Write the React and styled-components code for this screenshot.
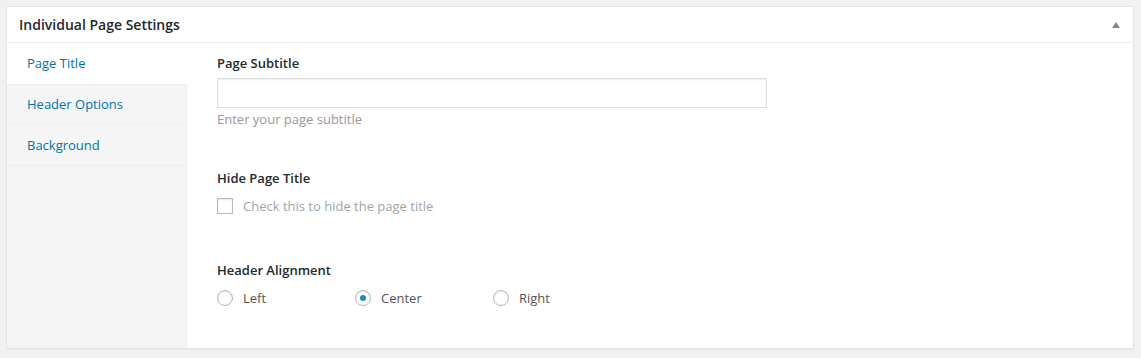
import React, { useState } from 'react';
import styled, { createGlobalStyle } from 'styled-components';

const Global = createGlobalStyle`
  html, body {
    margin: 0;
    padding: 0;
    background: #f1f1f1;
  }
  body {
    font-family: "Open Sans", "Liberation Sans", sans-serif;
    font-size: 13px;
    color: #444;
  }
`;

const tabs = ['Page Title', 'Header Options', 'Background'];
const alignments = ['Left', 'Center', 'Right'];

// page wrapper
const Page = styled.div`
  padding: 6px 7px 10px 6px;
`;

const Box = styled.div`
  background: #fff;
  border: 1px solid #e5e5e5;
  box-shadow: 0 1px 1px rgba(0, 0, 0, 0.04);
`;

const Header = styled.div`
  display: flex;
  align-items: center;
  justify-content: space-between;
  height: 35px;
  padding: 0 13px 0 12px;
  border-bottom: 1px solid #eee;
`;

const Title = styled.h2`
  margin: 0;
  font-size: 14px;
  font-weight: 600;
  color: #23282d;
  line-height: 1.4;
`;

const Toggle = styled.span`
  width: 0;
  height: 0;
  border-left: 4px solid transparent;
  border-right: 4px solid transparent;
  border-bottom: 6px solid #82878c;
  margin-top: 1px;
`;

const Body = styled.div`
  display: flex;
  min-height: 305px;
`;

const Sidebar = styled.ul`
  list-style: none;
  margin: 0;
  padding: 0;
  width: 179px;
  flex-shrink: 0;
  background: #f5f5f5;
  border-right: 1px solid #eee;
`;

const Tab = styled.li`
  display: flex;
  align-items: center;
  height: 40px;
  padding: 0 20px;
  border-bottom: 1px solid #eee;
  color: #0073aa;
  cursor: pointer;
  background: ${(p) => (p.$active ? '#fff' : 'transparent')};
  margin-right: ${(p) => (p.$active ? '-1px' : '0')};
  border-bottom-color: ${(p) => (p.$active ? '#fff' : '#eee')};
  position: relative;
  ${(p) => p.$active && 'box-shadow: 0 1px 0 #eee;'}
`;

const Content = styled.div`
  flex: 1;
  padding: 11px 30px 0 30px;
`;

const Field = styled.div`
  margin-bottom: ${(p) => p.$space}px;
`;

const Label = styled.div`
  font-weight: 600;
  color: #23282d;
  line-height: 18px;
  margin-bottom: ${(p) => p.$gap || 6}px;
`;

const TextInput = styled.input`
  display: block;
  box-sizing: border-box;
  width: 550px;
  height: 30px;
  margin: 0;
  padding: 3px 5px;
  border: 1px solid #ddd;
  box-shadow: inset 0 1px 2px rgba(0, 0, 0, 0.07);
  font-family: inherit;
  font-size: 14px;
  color: #32373c;
  outline: none;
`;

const Description = styled.p`
  margin: 2px 0 0;
  line-height: 18px;
  color: #999;
`;

const CheckRow = styled.label`
  display: flex;
  align-items: center;
  height: 18px;
  color: #a0a5aa;
`;

const Box16 = styled.span`
  box-sizing: border-box;
  width: 16px;
  height: 16px;
  margin-right: 10px;
  border: 1px solid #b4b9be;
  background: #fff;
  box-shadow: inset 0 1px 2px rgba(0, 0, 0, 0.1);
  border-radius: ${(p) => (p.$round ? '50%' : '0')};
  display: flex;
  align-items: center;
  justify-content: center;
`;

const Dot = styled.span`
  width: 6px;
  height: 6px;
  border-radius: 50%;
  background: #1e8cbe;
`;

const RadioRow = styled.div`
  display: flex;
  height: 18px;
`;

const RadioItem = styled.label`
  display: flex;
  align-items: center;
  width: 138px;
  color: #555;
  cursor: pointer;
`;

const App = () => {
  const [align, setAlign] = useState('Center');
  return (
    <Page>
      <Global />
      <Box>
        <Header>
          <Title>Individual Page Settings</Title>
          <Toggle />
        </Header>
        <Body>
          <Sidebar>
            {tabs.map((t, i) => (
              <Tab key={t} $active={i === 0}>
                {t}
              </Tab>
            ))}
          </Sidebar>
          <Content>
            <Field $space={41}>
              <Label>Page Subtitle</Label>
              <TextInput type="text" />
              <Description>Enter your page subtitle</Description>
            </Field>
            <Field $space={46}>
              <Label $gap={10}>Hide Page Title</Label>
              <CheckRow>
                <Box16 />
                Check this to hide the page title
              </CheckRow>
            </Field>
            <Field $space={0}>
              <Label $gap={10}>Header Alignment</Label>
              <RadioRow>
                {alignments.map((a) => (
                  <RadioItem key={a} onClick={() => setAlign(a)}>
                    <Box16 $round>{align === a && <Dot />}</Box16>
                    {a}
                  </RadioItem>
                ))}
              </RadioRow>
            </Field>
          </Content>
        </Body>
      </Box>
    </Page>
  );
};

export default App;
